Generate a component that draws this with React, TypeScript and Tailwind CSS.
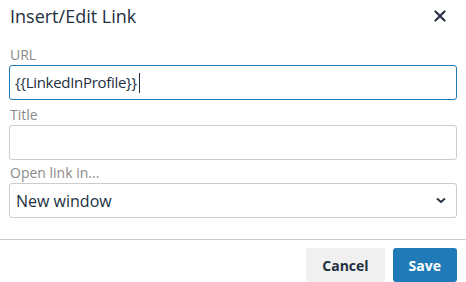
import React from "react";

const font = { fontFamily: '"Open Sans", "Noto Sans", sans-serif' };

function Label({ children, mt }: { children: React.ReactNode; mt: string }) {
  return (
    <div className={`${mt} h-[20px] leading-[20px] text-[14px] text-[#8b8b8b] pl-[1px]`}>
      {children}
    </div>
  );
}

export default function App() {
  return (
    <div
      className="w-[466px] h-[282px] overflow-hidden bg-white flex flex-col text-[#222f3e]"
      style={font}
    >
      <div className="h-[48px] relative px-[10px] pt-[4px]">
        <div className="text-[18px] leading-[24px] text-[#222f3e]">Insert/Edit Link</div>
        <svg
          className="absolute left-[428px] top-[4px]"
          width="24"
          height="24"
          viewBox="0 0 24 24"
        >
          <path
            fill="#222f3e"
            d="M17.3 8.2L13.4 12l3.9 3.8a1 1 0 0 1-1.5 1.5L12 13.4l-3.8 3.9a1 1 0 0 1-1.5-1.5l3.9-3.8-3.9-3.8a1 1 0 0 1 1.5-1.5l3.8 3.9 3.8-3.9a1 1 0 0 1 1.5 1.5z"
          />
        </svg>
      </div>
      <div className="px-[9px] flex flex-col">
        <Label mt="mt-0">URL</Label>
        <div className="h-[35px] border border-[#207ab7] rounded-[3px] flex items-center pl-[5px] text-[15px] tracking-[-0.3px]">
          <span>{"{{LinkedInProfile}}"}</span>
          <span className="ml-[2px] h-[20px] border-l border-[#222f3e]"></span>
        </div>
        <Label mt="mt-[5px]">Title</Label>
        <div className="h-[35px] border border-[#cccccc] rounded-[3px]"></div>
        <Label mt="mt-[3px]">Open link in...</Label>
        <div className="h-[35px] border border-[#cccccc] rounded-[3px] flex items-center justify-between pl-[6px] pr-[10px] text-[16px]">
          <span>New window</span>
          <svg width="10" height="7" viewBox="0 0 10 7">
            <path d="M1 1.5l4 3.5 4-3.5" fill="none" stroke="#222f3e" strokeWidth="1.8" />
          </svg>
        </div>
      </div>
      <div className="mt-[21px] border-t border-[#cccccc] flex justify-end gap-[8px] pt-[8px] pr-[9px]">
        <button className="h-[34px] px-[16px] rounded-[3px] bg-[#f0f0f0] text-[14px] font-bold text-[#222f3e]">
          Cancel
        </button>
        <button className="h-[34px] px-[16px] rounded-[3px] bg-[#207ab7] text-[14px] font-bold text-white">
          Save
        </button>
      </div>
    </div>
  );
}
